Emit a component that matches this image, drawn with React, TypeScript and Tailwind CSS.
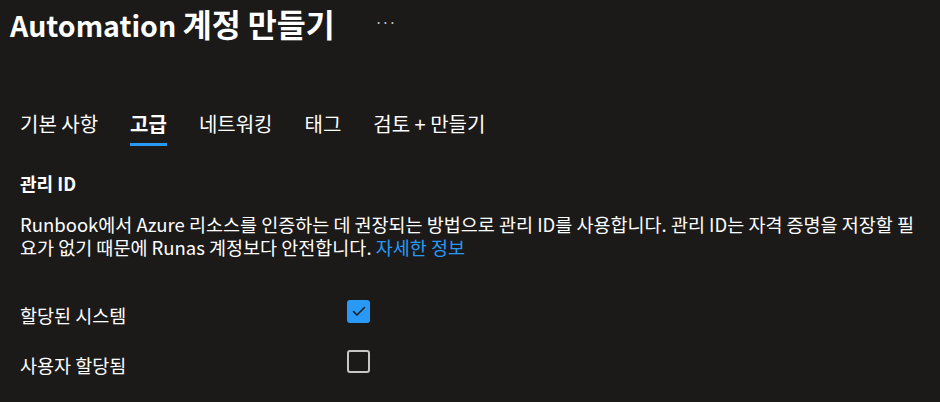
const font = { fontFamily: '"Noto Sans CJK KR", "Noto Sans", sans-serif' };

const tabs = ['기본 사항', '고급', '네트워킹', '태그', '검토 + 만들기'];

function Checkbox({ checked }: { checked: boolean }) {
    if (checked) {
        return (
            <div className="w-[23px] h-[23px] rounded-[3px] bg-[#2899f5] flex items-center justify-center">
                <svg width="14" height="11" viewBox="0 0 14 11" fill="none">
                    <path d="M1.5 5.5 L5 9 L12.5 1.5" stroke="#1b1a19" strokeWidth="1.5" strokeLinecap="round" strokeLinejoin="round" />
                </svg>
            </div>
        );
    }
    return <div className="w-[23px] h-[23px] rounded-[3px] border-2 border-[#c8c6c4]" />;
}

export default function App() {
    return (
        <div className="w-[940px] h-[402px] bg-[#1b1a19] text-white overflow-hidden" style={font}>
            {/* header */}
            <div className="flex items-center pl-[10px] pt-[4px] h-[44px]">
                <h1 className="text-[28.5px] font-bold leading-[40px]">
                    Automation <span className="text-[31.5px]">계정 만들기</span>
                </h1>
                <span className="ml-[40px] text-[#c8c6c4] text-[14px] leading-none -mt-[4px] tracking-[-1px]">···</span>
            </div>

            {/* tabs */}
            <div className="flex gap-[32px] pl-[20px] mt-[64px]">
                {tabs.map((t, i) => (
                    <div key={t} className="flex flex-col">
                        <span className={`text-[20px] leading-[32px] ${i === 1 ? 'font-bold' : ''}`}>{t}</span>
                        <div className={`h-[3px] mt-[3px] ${i === 1 ? 'bg-[#2899f5]' : ''}`} />
                    </div>
                ))}
            </div>

            {/* managed identity */}
            <div className="px-[20px] mt-[26px]">
                <h2 className="text-[18px] font-bold leading-[22px]">관리 ID</h2>
                <div className="mt-[19px] text-[18.5px] leading-[23px]">
                    <div className="whitespace-nowrap">Runbook에서 Azure 리소스를 인증하는 데 권장되는 방법으로 관리 ID를 사용합니다. 관리 ID는 자격 증명을 저장할 필</div>
                    <div className="whitespace-nowrap">
                        요가 없기 때문에 Runas 계정보다 안전합니다. <span className="text-[#2899f5]">자세한 정보</span>
                    </div>
                </div>

                <div className="mt-[41px] flex flex-col gap-[23px]">
                    <div className="flex items-start">
                        <span className="w-[327px] mt-[4px] text-[18.5px] leading-[23px]">할당된 시스템</span>
                        <Checkbox checked />
                    </div>
                    <div className="flex items-start">
                        <span className="w-[327px] mt-[4px] text-[18.5px] leading-[23px]">사용자 할당됨</span>
                        <Checkbox checked={false} />
                    </div>
                </div>
            </div>
        </div>
    );
}
